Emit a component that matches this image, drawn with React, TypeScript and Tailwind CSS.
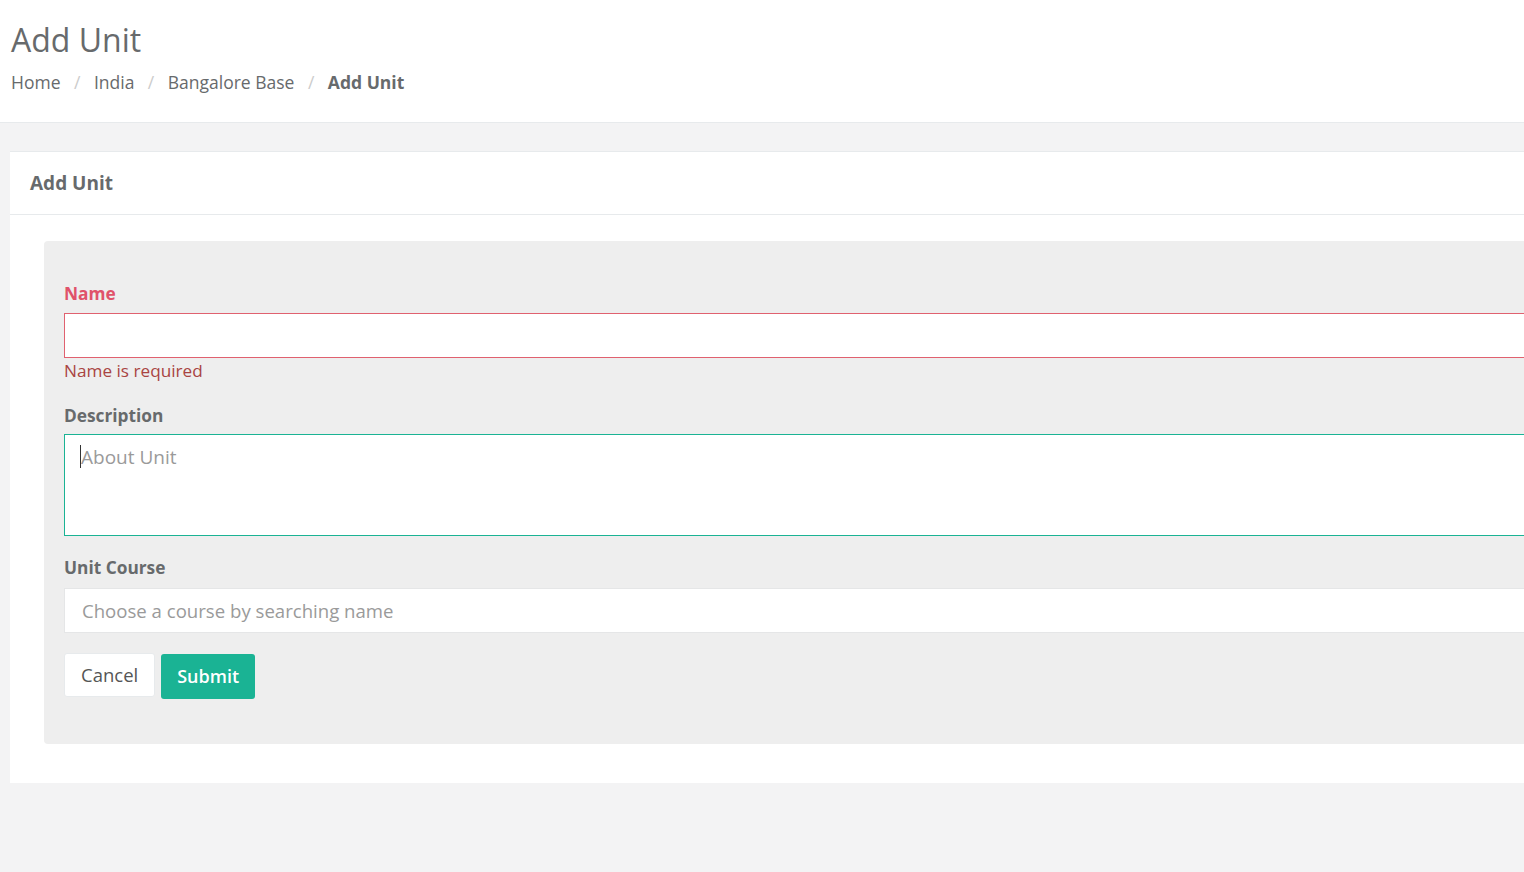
import React from 'react';

const font = { fontFamily: '"Open Sans", "Noto Sans", Arial, sans-serif' };

export default function App() {
  return (
    <div className="min-h-screen w-full overflow-hidden bg-[#f3f3f4] text-[#676a6c]" style={font}>
      {/* page heading */}
      <div className="h-[123px] border-b border-[#e7eaec] bg-white px-[11px] pt-[18px]">
        <h2 className="text-[32px] leading-[44px] font-normal text-[#676a6c]">Add Unit</h2>
        <ol className="mt-[8px] flex items-center text-[17.5px] leading-[24px]">
          <li>Home</li>
          <li className="px-[13.5px] text-[#cccccc]">/</li>
          <li>India</li>
          <li className="px-[13.5px] text-[#cccccc]">/</li>
          <li>Bangalore Base</li>
          <li className="px-[13.5px] text-[#cccccc]">/</li>
          <li className="font-bold">Add Unit</li>
        </ol>
      </div>

      {/* card */}
      <div className="ml-[10px] mt-[28px] w-[1640px] border-t border-[#e7eaec] bg-white">
        <div className="flex h-[63px] items-center border-b border-[#e7eaec] px-[20px]">
          <h5 className="text-[19px] font-bold text-[#676a6c]">Add Unit</h5>
        </div>
        <div className="px-[34px] pt-[26px] pb-[39px]">
          <div className="rounded-[4px] bg-[#eeeeee] px-[20px] pt-[41px] pb-[45px]">
            <label className="block text-[17.3px] font-bold leading-[24px] text-[#e0526a]">Name</label>
            <input
              className="mt-[7px] block h-[45px] w-full border border-[#e0616f] bg-white px-[16px] outline-none"
              type="text"
            />
            <div className="mt-[1px] text-[17.2px] leading-[24px] text-[#a94442]">Name is required</div>

            <label className="mt-[21px] block text-[17.3px] font-bold leading-[24px]">Description</label>
            <div className="relative mt-[6px]">
              <textarea
                className="block h-[102px] w-full resize-none border border-[#1ab394] bg-white px-[16px] py-[8px] text-[19px] leading-[28px] outline-none placeholder:text-[#9a9a9a]"
                placeholder="About Unit"
              />
              <span className="absolute left-[16px] top-[11px] h-[23px] w-px bg-[#333333]" />
            </div>

            <label className="mt-[20px] block text-[17.3px] font-bold leading-[24px]">Unit Course</label>
            <input
              className="mt-[8px] block h-[45px] w-full border border-[#e5e6e7] bg-white px-[17px] text-[18.6px] outline-none placeholder:text-[#9a9a9a]"
              placeholder="Choose a course by searching name"
              type="text"
            />

            <div className="mt-[20px] flex items-start gap-[6px]">
              <button className="h-[44px] rounded-[3px] border border-[#e7eaec] bg-white px-[16px] text-[18.5px] text-[#555555]">
                Cancel
              </button>
              <button className="mt-[1px] h-[45px] rounded-[3px] bg-[#1ab394] px-[16px] text-[18px] font-semibold text-white">
                Submit
              </button>
            </div>
          </div>
        </div>
      </div>
    </div>
  );
}
